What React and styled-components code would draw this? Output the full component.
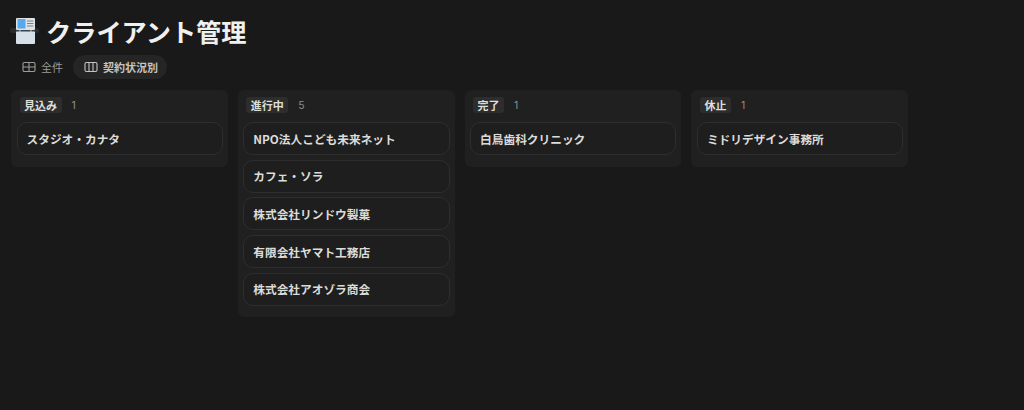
import React from "react";
import styled, { createGlobalStyle } from "styled-components";

const Global = createGlobalStyle`
  html, body { margin: 0; padding: 0; background: #191919; }
  body { font-family: Inter, "Noto Sans CJK JP", "Liberation Sans", sans-serif; }
`;

const Page = styled.div`
  width: 1024px;
  height: 410px;
  overflow: hidden;
  padding: 15px 0 0 10px;
  box-sizing: border-box;
  background: #191919;
`;

const Header = styled.header`
  display: flex;
  align-items: center;
  gap: 6px;
  height: 32px;
`;

const PageIcon = styled.svg`
  width: 30px;
  height: 30px;
  flex: none;
`;

const Title = styled.h1`
  margin: 0;
  font-size: 25.2px;
  line-height: 32px;
  font-weight: 700;
  color: #f0f0ee;
  font-family: "Noto Sans CJK JP", sans-serif;
`;

const Tabs = styled.nav`
  display: flex;
  align-items: center;
  gap: 1px;
  margin: 8px 0 0 1px;
  height: 24px;
`;

const Tab = styled.div`
  display: flex;
  align-items: center;
  gap: 5px;
  height: 24px;
  padding: 0 9px 0 11px;
  border-radius: 12px;
  font-size: 11px;
  font-weight: ${(p) => (p.$active ? 700 : 400)};
  color: ${(p) => (p.$active ? "#c4c4c1" : "#9b9b98")};
  background: ${(p) => (p.$active ? "#252525" : "transparent")};
  font-family: "Noto Sans CJK JP", sans-serif;
`;

const TabIcon = styled.svg`
  width: 14px;
  height: 14px;
  flex: none;
  fill: none;
  stroke: currentColor;
  stroke-width: 1.1;
`;

const Board = styled.main`
  display: flex;
  align-items: flex-start;
  gap: 10px;
  margin: 11px 0 0 1px;
`;

const Column = styled.section`
  width: 216.8px;
  box-sizing: border-box;
  padding: 7px 5px 11.5px 5.5px;
  background: #202020;
  border-radius: 6px;
`;

const ColumnHead = styled.div`
  display: flex;
  align-items: center;
  gap: 10px;
  height: 16px;
  padding-left: 3px;
  margin-bottom: 9px;
`;

const Badge = styled.span`
  display: inline-flex;
  align-items: center;
  height: 16px;
  padding: 0 4.5px;
  border-radius: 3px;
  background: #2d2d2d;
  color: #dededb;
  font-size: 11px;
  font-weight: 700;
  font-family: "Noto Sans CJK JP", sans-serif;
`;

const Count = styled.span`
  color: #8f8f8c;
  font-size: 10.5px;
  font-family: Inter, sans-serif;
`;

const Cards = styled.div`
  display: flex;
  flex-direction: column;
  gap: 4.7px;
`;

const Card = styled.article`
  height: 33px;
  box-sizing: border-box;
  display: flex;
  align-items: center;
  padding: 0 9px 1px;
  border: 1px solid #2e2e2e;
  border-radius: 10px;
  background: #1e1e1e;
  color: #dcdcd9;
  font-size: 11.7px;
  font-weight: 700;
  font-family: "Noto Sans CJK JP", sans-serif;
`;

const columns = [
  { name: "見込み", items: ["スタジオ・カナタ"] },
  {
    name: "進行中",
    items: [
      "NPO法人こども未来ネット",
      "カフェ・ソラ",
      "株式会社リンドウ製菓",
      "有限会社ヤマト工務店",
      "株式会社アオゾラ商会",
    ],
  },
  { name: "完了", items: ["白鳥歯科クリニック"] },
  { name: "休止", items: ["ミドリデザイン事務所"] },
];

export default function App() {
  return (
    <Page>
      <Global />
      <Header>
        <PageIcon viewBox="0 0 30 30">
          <rect x="0" y="12" width="29" height="5" rx="2.5" fill="#2b2b2b" />
          <rect x="6" y="2" width="19" height="12" rx="1" fill="#dfe3e6" />
          <rect x="7.5" y="3" width="8" height="9.5" fill="#55a9ee" />
          <path d="M17 5h6.5M17 7.5h6.5M17 10h6.5" stroke="#76818a" strokeWidth="1.1" />
          <rect x="6" y="15" width="19" height="13" rx="1" fill="#d5e0e8" />
          <path d="M6 14h19v1.5H6z" fill="#3d4246" />
          <path d="M10 13.5v2.5M21 13.5v2.5" stroke="#c9ced2" strokeWidth="1" />
        </PageIcon>
        <Title>クライアント管理</Title>
      </Header>
      <Tabs>
        <Tab>
          <TabIcon viewBox="0 0 14 14">
            <rect x="1" y="2.5" width="12" height="9" rx="1.2" />
            <path d="M1 7h12M7 2.5v9" />
          </TabIcon>
          全件
        </Tab>
        <Tab $active>
          <TabIcon viewBox="0 0 14 14">
            <rect x="1" y="2.5" width="12" height="9" rx="1.5" />
            <path d="M5 2.5v9M9 2.5v9" />
          </TabIcon>
          契約状況別
        </Tab>
      </Tabs>
      <Board>
        {columns.map((c) => (
          <Column key={c.name}>
            <ColumnHead>
              <Badge>{c.name}</Badge>
              <Count>{c.items.length}</Count>
            </ColumnHead>
            <Cards>
              {c.items.map((i) => (
                <Card key={i}>{i}</Card>
              ))}
            </Cards>
          </Column>
        ))}
      </Board>
    </Page>
  );
}
